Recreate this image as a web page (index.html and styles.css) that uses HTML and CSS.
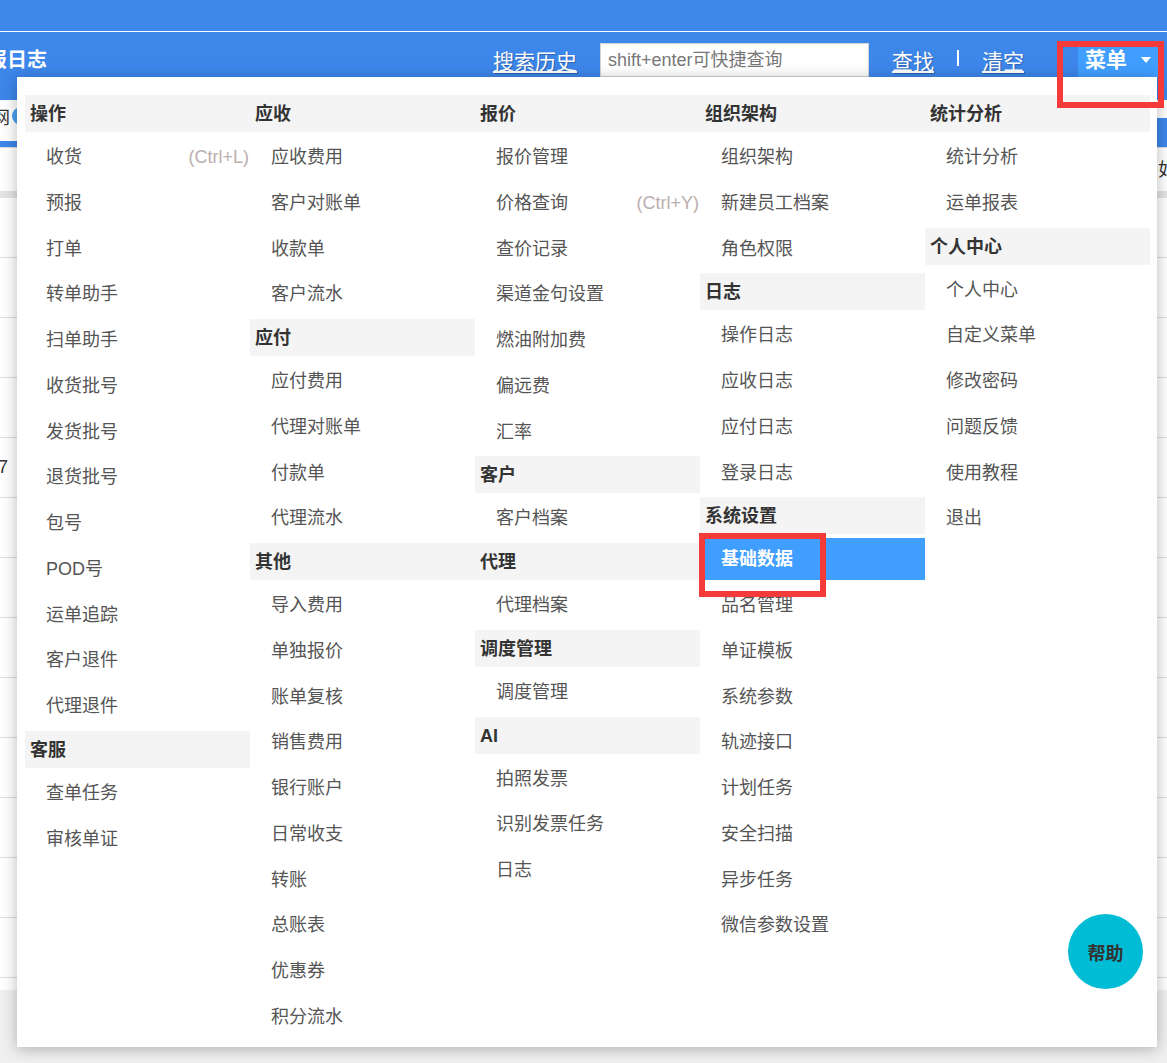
FILE: index.html
```html
<!DOCTYPE html>
<html lang="zh-CN">
<head>
	<meta charset="UTF-8">
	<title>日志</title>
	<link rel="stylesheet" href="styles.css">
</head>
<body>
	<div class="page">
		<div class="topbar"></div>
		<div class="header">
			<div class="title">报日志</div>
			<a class="link link-history">搜索历史</a>
			<input class="search-input" type="text" placeholder="shift+enter可快捷查询">
			<a class="link link-find">查找</a>
			<span class="sep"></span>
			<a class="link link-clear">清空</a>
			<div class="menu-btn">菜单<span class="caret"></span></div>
		</div>
		<div class="tabs">
			<span class="tab-text">网</span><span class="tab-dot"></span>
			<span class="tab-active"></span>
		</div>
		<div class="thead"><span class="th-text">如</span></div>
		<div class="tbody">
			<div class="row"></div>
			<div class="row"></div>
			<div class="row"></div>
			<div class="row"></div>
			<div class="row"><span class="cell">7</span></div>
			<div class="row"></div>
			<div class="row"></div>
			<div class="row"></div>
			<div class="row"></div>
			<div class="row"></div>
			<div class="row"></div>
			<div class="row"></div>
			<div class="row"></div>
		</div>
	</div>

	<div class="dropdown">
		<div class="col">
			<div class="group-title">操作</div>
			<div class="item">收货<span class="key">(Ctrl+L)</span></div>
			<div class="item">预报</div>
			<div class="item">打单</div>
			<div class="item">转单助手</div>
			<div class="item">扫单助手</div>
			<div class="item">收货批号</div>
			<div class="item">发货批号</div>
			<div class="item">退货批号</div>
			<div class="item">包号</div>
			<div class="item">POD号</div>
			<div class="item">运单追踪</div>
			<div class="item">客户退件</div>
			<div class="item">代理退件</div>
			<div class="group-title">客服</div>
			<div class="item">查单任务</div>
			<div class="item">审核单证</div>
		</div>
		<div class="col">
			<div class="group-title">应收</div>
			<div class="item">应收费用</div>
			<div class="item">客户对账单</div>
			<div class="item">收款单</div>
			<div class="item">客户流水</div>
			<div class="group-title">应付</div>
			<div class="item">应付费用</div>
			<div class="item">代理对账单</div>
			<div class="item">付款单</div>
			<div class="item">代理流水</div>
			<div class="group-title">其他</div>
			<div class="item">导入费用</div>
			<div class="item">单独报价</div>
			<div class="item">账单复核</div>
			<div class="item">销售费用</div>
			<div class="item">银行账户</div>
			<div class="item">日常收支</div>
			<div class="item">转账</div>
			<div class="item">总账表</div>
			<div class="item">优惠券</div>
			<div class="item">积分流水</div>
		</div>
		<div class="col">
			<div class="group-title">报价</div>
			<div class="item">报价管理</div>
			<div class="item">价格查询<span class="key">(Ctrl+Y)</span></div>
			<div class="item">查价记录</div>
			<div class="item">渠道金句设置</div>
			<div class="item">燃油附加费</div>
			<div class="item">偏远费</div>
			<div class="item">汇率</div>
			<div class="group-title">客户</div>
			<div class="item">客户档案</div>
			<div class="group-title">代理</div>
			<div class="item">代理档案</div>
			<div class="group-title">调度管理</div>
			<div class="item">调度管理</div>
			<div class="group-title">AI</div>
			<div class="item">拍照发票</div>
			<div class="item">识别发票任务</div>
			<div class="item">日志</div>
		</div>
		<div class="col">
			<div class="group-title">组织架构</div>
			<div class="item">组织架构</div>
			<div class="item">新建员工档案</div>
			<div class="item">角色权限</div>
			<div class="group-title">日志</div>
			<div class="item">操作日志</div>
			<div class="item">应收日志</div>
			<div class="item">应付日志</div>
			<div class="item">登录日志</div>
			<div class="group-title">系统设置</div>
			<div class="item active">基础数据</div>
			<div class="item">品名管理</div>
			<div class="item">单证模板</div>
			<div class="item">系统参数</div>
			<div class="item">轨迹接口</div>
			<div class="item">计划任务</div>
			<div class="item">安全扫描</div>
			<div class="item">异步任务</div>
			<div class="item">微信参数设置</div>
		</div>
		<div class="col">
			<div class="group-title">统计分析</div>
			<div class="item">统计分析</div>
			<div class="item">运单报表</div>
			<div class="group-title">个人中心</div>
			<div class="item">个人中心</div>
			<div class="item">自定义菜单</div>
			<div class="item">修改密码</div>
			<div class="item">问题反馈</div>
			<div class="item">使用教程</div>
			<div class="item">退出</div>
		</div>
	</div>

	<div class="help">帮助</div>

	<div class="mark mark-menu"></div>
	<div class="mark mark-item"></div>
</body>
</html>
```

FILE: styles.css
```css
*{margin:0;padding:0;box-sizing:border-box;}
body{
	width:1167px;
	height:1063px;
	overflow:hidden;
	position:relative;
	background:#f0f0f0;
	font-family:"Liberation Sans","Noto Sans CJK SC",sans-serif;
	color:#333;
}
.page{
	height:990px;
	background:#fff;
	overflow:hidden;
}
.topbar{
	height:32px;
	background:#3d86ea;
	border-bottom:1px solid #fff;
}
.header{
	height:68px;
	background:#3d86ea;
	display:flex;
	align-items:flex-start;
	padding:11px 7px 0 0;
	white-space:nowrap;
}
.title{
	flex:1;
	margin-left:-13px;
	font-size:20px;
	font-weight:bold;
	line-height:34px;
	color:#fff;
}
.link{
	font-size:21px;
	line-height:38px;
	color:#fff;
	text-decoration:underline;
	text-shadow:1px 1px 1px rgba(0,0,0,.25);
	cursor:pointer;
}
.search-input{
	width:269px;
	height:34px;
	margin-left:23px;
	border:1px solid #d4d4d4;
	padding:0 7px;
	font-family:"Liberation Sans","Noto Sans CJK SC",sans-serif;
	font-size:18px;
	color:#333;
	outline:none;
}
.search-input::placeholder{color:#777;}
.link-find{margin-left:23px;}
.sep{
	width:2px;
	height:16px;
	margin:7px 0 0 23px;
	background:#fff;
}
.link-clear{margin-left:23px;}
.menu-btn{
	width:82px;
	height:34px;
	margin-left:54px;
	padding-left:7px;
	background:#409eff;
	color:#fff;
	font-size:21px;
	font-weight:bold;
	line-height:34px;
	display:flex;
	align-items:center;
}
.caret{
	margin-left:14px;
	border-left:5px solid transparent;
	border-right:5px solid transparent;
	border-top:6px solid #fff;
}

.tabs{
	height:47px;
	padding-bottom:10px;
	border-bottom:6px solid #3d86ea;
	display:flex;
	align-items:center;
}
.tab-text{
	margin-left:-8px;
	font-size:18px;
	color:#333;
}
.tab-dot{
	width:18px;
	height:18px;
	margin-left:2px;
	border-radius:50%;
	background:#4aa0f0;
}
.tab-active{
	margin-left:auto;
	align-self:flex-end;
	width:20px;
	height:23px;
	margin-bottom:-10px;
	background:#3d86ea;
}
.thead{
	height:51px;
	padding-bottom:4px;
	border-top:1px solid #ddd;
	border-bottom:7px solid #e4e4e4;
	display:flex;
	align-items:center;
	justify-content:flex-end;
}
.th-text{
	margin-right:-9px;
	font-size:18px;
	color:#333;
}
.row{
	height:60px;
	border-bottom:1px solid #ddd;
	display:flex;
	align-items:center;
}
.cell{
	margin-left:-2px;
	font-size:18px;
	color:#333;
}

/* 下拉菜单 */
.dropdown{
	position:absolute;
	left:17px;
	top:77px;
	width:1140px;
	height:970px;
	padding:18px 7px 0 8px;
	background:#fff;
	box-shadow:0 2px 14px rgba(0,0,0,.28);
	display:flex;
	align-items:flex-start;
}
.col{
	width:225px;
	display:flex;
	flex-direction:column;
	gap:4px;
}
.group-title{
	height:37px;
	line-height:37px;
	padding:1px 0 0 5px;
	background:#f4f4f4;
	font-size:18px;
	font-weight:bold;
	color:#333;
}
.item{
	height:41.75px;
	line-height:39.75px;
	padding:2px 1px 0 21px;
	font-size:18px;
	color:#555;
	display:flex;
	justify-content:space-between;
	white-space:nowrap;
}
.item .key{color:#bcaeae;}
.item.active{
	background:#409eff;
	color:#fff;
	font-weight:bold;
}

.help{
	position:absolute;
	left:1068px;
	top:914px;
	width:75px;
	height:75px;
	border-radius:50%;
	background:#00bcd4;
	color:#333;
	font-size:18px;
	font-weight:bold;
	display:flex;
	align-items:center;
	justify-content:center;
}

/* 标注框 */
.mark{
	position:absolute;
	border:6px solid #f53a3a;
}
.mark-menu{
	left:1057px;
	top:41px;
	width:107px;
	height:67px;
}
.mark-item{
	left:699px;
	top:533px;
	width:127px;
	height:64px;
}
```
